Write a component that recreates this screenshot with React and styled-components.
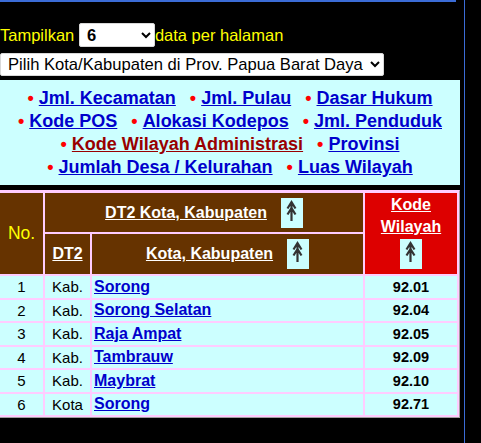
import styled, { createGlobalStyle } from "styled-components"

const GlobalStyle = createGlobalStyle`
body{
  margin:0;
  background:#000;
  font-family:"Liberation Sans", Arial, sans-serif;
}
`

const Page = styled.div`
display:flex;
min-height:443px;
`

const Main = styled.div`
width:464px;
border-right:1px solid #3b6cd6;
`

const TopBar = styled.div`
width:456px;
height:2px;
background:#3b6cd6;
`

const PerPage = styled.div`
display:flex;
align-items:center;
margin-top:21px;
height:24px;
color:#ff0;
font-size:16.5px;
white-space:pre;
`

const Select = styled.select`
box-sizing:border-box;
width:${props => props.$w}px;
height:${props => props.$h}px;
margin:0;
padding:0 3px;
font-family:"Liberation Sans", Arial, sans-serif;
font-size:16.6px;
font-weight:${props => props.$bold ? 700 : 400};
color:#000;
background:#fff;
border:1px solid #d8d8d8;
border-radius:2px;
`

const CityRow = styled.div`
margin-top:6px;
height:23px;
display:flex;
`

const NavBox = styled.div`
margin-top:4px;
width:460px;
background:#ccffff;
padding:7px 0 6px;
font-size:18px;
font-weight:700;
line-height:23px;
`

const NavLine = styled.div`
display:flex;
justify-content:center;
column-gap:14px;
`

const NavItem = styled.span`
white-space:nowrap;
`

const Bullet = styled.span`
color:#f00;
margin-right:5px;
`

const NavLink = styled.a`
color:${props => props.$active ? '#990000' : '#0000cc'};
text-decoration:underline;
cursor:pointer;
`

const Table = styled.table`
margin:5px 0 0 -3px;
width:463px;
table-layout:fixed;
border-collapse:separate;
border-spacing:2px;
background:#ffccff;
border:1px solid;
border-color:#ffccff #a0a0a0 #a0a0a0 #ffccff;
font-family:"Liberation Sans", Arial, sans-serif;
`

const HeadCell = styled.th`
padding:0;
height:${props => props.$h ? props.$h + 'px' : 'auto'};
background:${props => props.$red ? '#dd0000' : '#663300'};
color:#fff;
font-size:16px;
font-weight:700;
text-align:center;
vertical-align:middle;
`

const NoCell = styled(HeadCell)`
color:#ff0;
font-size:17.5px;
font-weight:400;
`

const KodeCell = styled(HeadCell)`
vertical-align:top;
padding-top:1px;
line-height:22px;
`

const HeadLabel = styled.span`
display:inline-flex;
align-items:center;
gap:14px;
`

const HeadLink = styled.a`
color:#fff;
text-decoration:underline;
font-size:16px;
cursor:pointer;
`

const IconRow = styled.div`
display:flex;
justify-content:center;
margin-top:1px;
`

const SortBox = styled.span`
display:inline-flex;
width:22px;
height:30px;
background:#ccffff;
`

const Cell = styled.td`
padding:0 2px;
height:21.5px;
background:#ccffff;
color:#000;
font-size:15px;
text-align:${props => props.$left ? 'left' : 'center'};
vertical-align:middle;
white-space:nowrap;
`

const KodeValue = styled(Cell)`
font-size:14.5px;
font-weight:700;
`

const CityLink = styled.a`
color:#0000cc;
font-size:16px;
font-weight:700;
text-decoration:underline;
cursor:pointer;
`

const SortIcon = () => (
  <SortBox>
    <svg width="22" height="30" viewBox="0 0 22 30">
      <path
        d="M10.5 4V23 M6.5 10.5L10.5 4L14.5 10.5 M6.5 16.5L10.5 10L14.5 16.5"
        fill="none"
        stroke="#333"
        strokeWidth="2.2"
      />
    </svg>
  </SortBox>
)

const navLines = [
  [{ t: 'Jml. Kecamatan' }, { t: 'Jml. Pulau' }, { t: 'Dasar Hukum' }],
  [{ t: 'Kode POS' }, { t: 'Alokasi Kodepos' }, { t: 'Jml. Penduduk' }],
  [{ t: 'Kode Wilayah Administrasi', active: true }, { t: 'Provinsi' }],
  [{ t: 'Jumlah Desa / Kelurahan' }, { t: 'Luas Wilayah' }],
]

const rows = [
  ['1', 'Kab.', 'Sorong', '92.01'],
  ['2', 'Kab.', 'Sorong Selatan', '92.04'],
  ['3', 'Kab.', 'Raja Ampat', '92.05'],
  ['4', 'Kab.', 'Tambrauw', '92.09'],
  ['5', 'Kab.', 'Maybrat', '92.10'],
  ['6', 'Kota', 'Sorong', '92.71'],
]

const App = () => {
  return (
    <Page>
      <GlobalStyle />
      <Main>
        <TopBar />
        <PerPage>
          Tampilkan{' '}
          <Select $w={76} $h={24} $bold defaultValue="6">
            <option>6</option>
            <option>10</option>
            <option>25</option>
          </Select>
          data per halaman
        </PerPage>
        <CityRow>
          <Select $w={384} $h={23}>
            <option>Pilih Kota/Kabupaten di Prov. Papua Barat Daya</option>
          </Select>
        </CityRow>
        <NavBox>
          {navLines.map((line, i) => (
            <NavLine key={i}>
              {line.map(item => (
                <NavItem key={item.t}>
                  <Bullet>•</Bullet>
                  <NavLink $active={item.active}>{item.t}</NavLink>
                </NavItem>
              ))}
            </NavLine>
          ))}
        </NavBox>
        <Table>
          <colgroup>
            <col style={{ width: 43 }} />
            <col style={{ width: 45 }} />
            <col style={{ width: 271 }} />
            <col style={{ width: 92 }} />
          </colgroup>
          <thead>
            <tr>
              <NoCell rowSpan={2}>No.</NoCell>
              <HeadCell colSpan={2} $h={39}>
                <HeadLabel>
                  <HeadLink>DT2 Kota, Kabupaten</HeadLink>
                  <SortIcon />
                </HeadLabel>
              </HeadCell>
              <KodeCell rowSpan={2} $red>
                <HeadLink>Kode</HeadLink>
                <br />
                <HeadLink>Wilayah</HeadLink>
                <IconRow>
                  <SortIcon />
                </IconRow>
              </KodeCell>
            </tr>
            <tr>
              <HeadCell $h={40}>
                <HeadLink>DT2</HeadLink>
              </HeadCell>
              <HeadCell $h={40}>
                <HeadLabel>
                  <HeadLink>Kota, Kabupaten</HeadLink>
                  <SortIcon />
                </HeadLabel>
              </HeadCell>
            </tr>
          </thead>
          <tbody>
            {rows.map(r => (
              <tr key={r[0]}>
                <Cell>{r[0]}</Cell>
                <Cell>{r[1]}</Cell>
                <Cell $left>
                  <CityLink>{r[2]}</CityLink>
                </Cell>
                <KodeValue>{r[3]}</KodeValue>
              </tr>
            ))}
          </tbody>
        </Table>
      </Main>
    </Page>
  )
}

export default App
